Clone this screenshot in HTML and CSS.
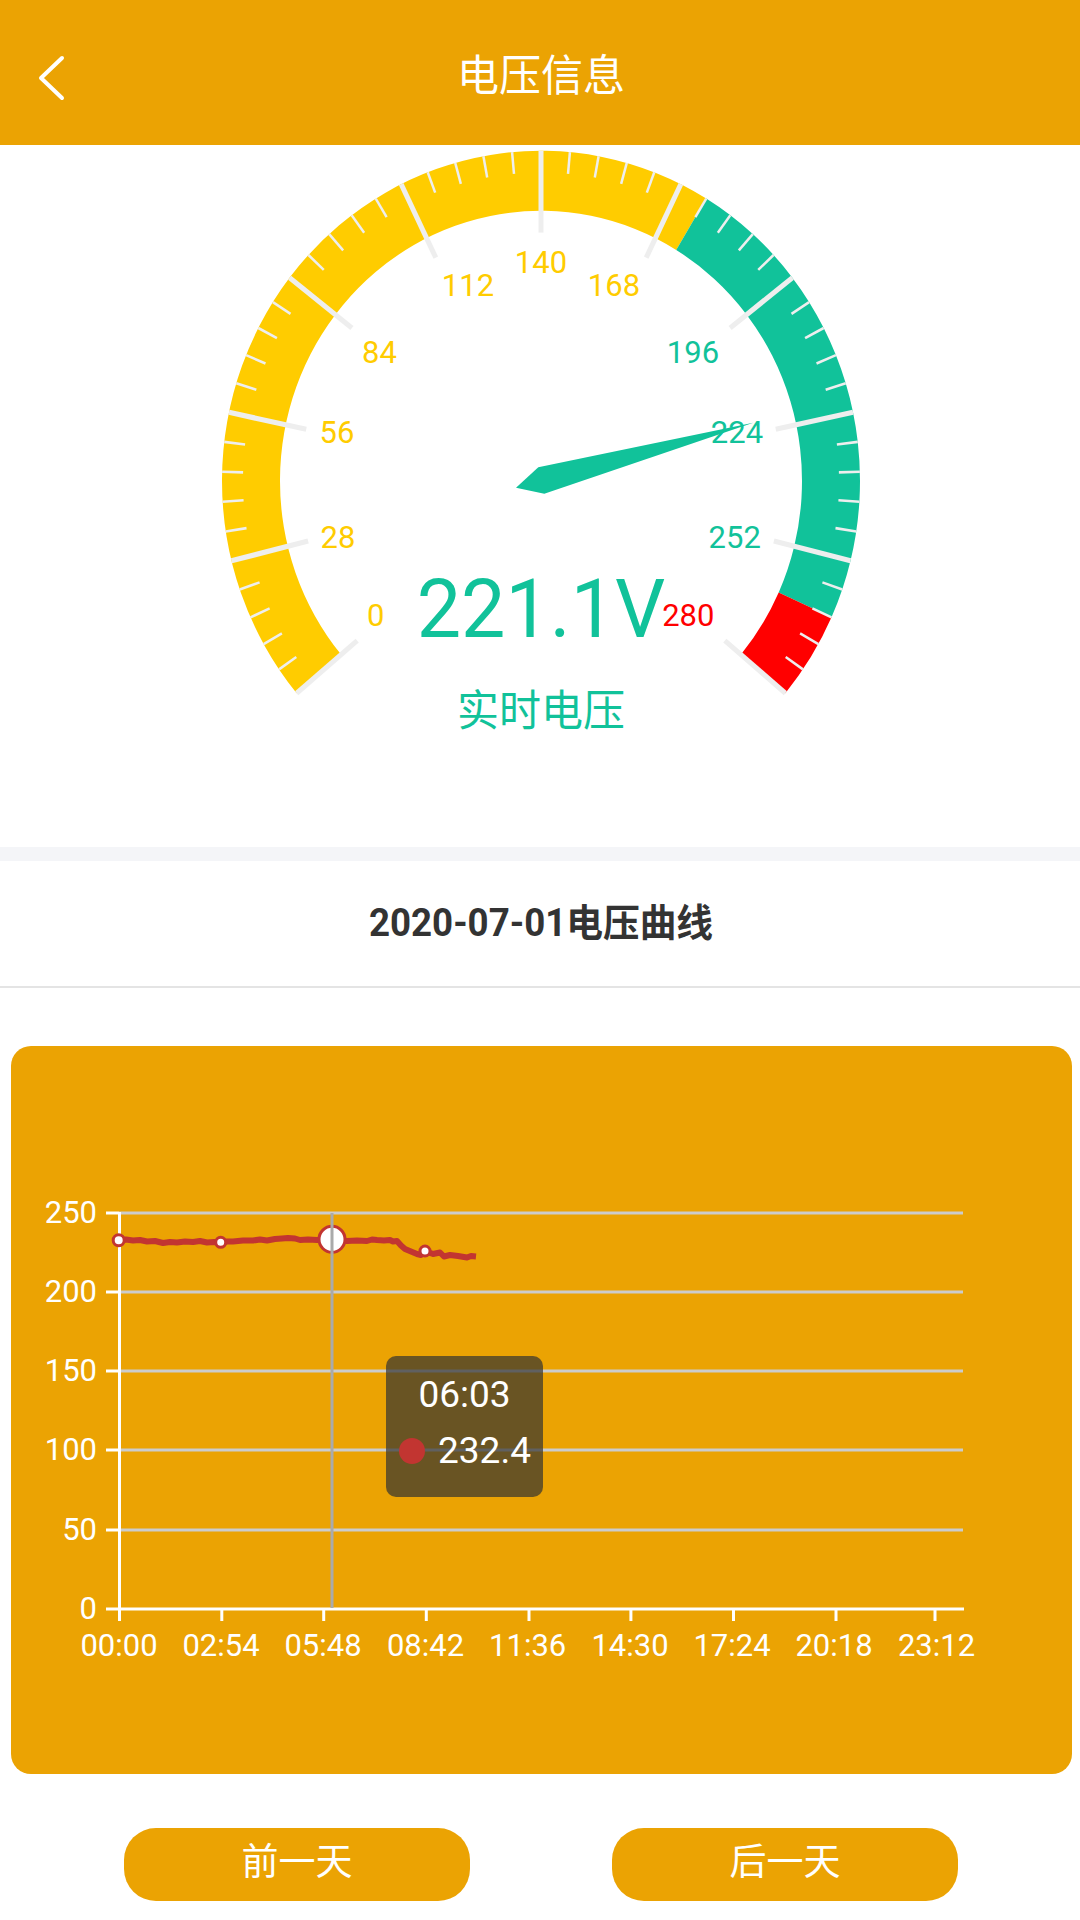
FILE: index.html
```html
<!DOCTYPE html>
<html lang="zh-CN">
<head>
    <meta charset="UTF-8">
    <meta name="viewport" content="width=device-width, initial-scale=1.0">
    <title>电压信息</title>
    <link rel="stylesheet" href="styles.css">
</head>
<body>
    <div class="nav-bar">
        <svg class="nav-back" width="30" height="48" viewBox="0 0 30 48">
            <path d="M25 4 L4 24 L25 44"></path>
        </svg>
        <span class="nav-title">电压信息</span>
    </div>

    <!-- coordinates are page coordinates, the screenshot is about 3.5% taller than wide -->
    <svg class="gauge" viewBox="0 145 1080 702">
        <g transform="scale(1 1.035)">
            <g id="gaugeBand"></g>
            <g id="gaugeTicks"></g>
        </g>
        <polygon class="gauge-needle" points="516,487.7 538.3,467.3 753.3,422.7 544.3,493.7"></polygon>
        <g transform="scale(1 1.035)">
            <text class="tick-label yellow" x="375.6" y="604.8">0</text>
            <text class="tick-label yellow" x="338" y="529">28</text>
            <text class="tick-label yellow" x="337" y="427.6">56</text>
            <text class="tick-label yellow" x="379.5" y="350.7">84</text>
            <text class="tick-label yellow" x="468" y="286">112</text>
            <text class="tick-label yellow" x="541" y="263.8">140</text>
            <text class="tick-label yellow" x="614" y="286">168</text>
            <text class="tick-label green" x="693" y="350.7">196</text>
            <text class="tick-label green" x="737" y="427.6">224</text>
            <text class="tick-label green" x="734.7" y="529">252</text>
            <text class="tick-label red" x="688.3" y="604.8">280</text>
            <text class="gauge-value" x="541" y="615.5">221.1V</text>
            <text class="gauge-name" x="541" y="701.5">实时电压</text>
        </g>
    </svg>

    <div class="section-gap"></div>
    <div class="section-title"><span>2020-07-01电压曲线</span></div>

    <div class="chart-card">
        <svg class="chart" viewBox="11 1046 1061 728">
            <g class="grid-lines">
                <line x1="119" y1="1213" x2="963" y2="1213"></line>
                <line x1="119" y1="1292" x2="963" y2="1292"></line>
                <line x1="119" y1="1371" x2="963" y2="1371"></line>
                <line x1="119" y1="1450" x2="963" y2="1450"></line>
                <line x1="119" y1="1530" x2="963" y2="1530"></line>
            </g>
            <g class="axis-lines">
                <line x1="119.5" y1="1212" x2="119.5" y2="1621"></line>
                <line x1="106" y1="1609" x2="964" y2="1609"></line>
                <line x1="106" y1="1213" x2="119" y2="1213"></line>
                <line x1="106" y1="1292" x2="119" y2="1292"></line>
                <line x1="106" y1="1371" x2="119" y2="1371"></line>
                <line x1="106" y1="1450" x2="119" y2="1450"></line>
                <line x1="106" y1="1530" x2="119" y2="1530"></line>
                <line x1="221.8" y1="1609" x2="221.8" y2="1621"></line>
                <line x1="323.7" y1="1609" x2="323.7" y2="1621"></line>
                <line x1="426.3" y1="1609" x2="426.3" y2="1621"></line>
                <line x1="529" y1="1609" x2="529" y2="1621"></line>
                <line x1="630.9" y1="1609" x2="630.9" y2="1621"></line>
                <line x1="733.5" y1="1609" x2="733.5" y2="1621"></line>
                <line x1="836" y1="1609" x2="836" y2="1621"></line>
                <line x1="935" y1="1609" x2="935" y2="1621"></line>
            </g>
            <polyline class="volt-line" points="119,1240 126,1239.5 133,1240.5 140,1240 147,1241.5 155,1241 163,1243 170,1242 177,1242.5 185,1241.5 193,1242 200,1241 207,1242.5 214,1242 221,1243 227,1241.5 233,1241.5 243,1240.5 253,1240.5 260,1239.5 267,1240.5 275,1239 282,1238.5 288,1238 295,1238.5 300,1240 308,1239.5 317,1240 324,1239.5 332,1239.5 340,1240 347,1241 357,1240.5 367,1241 372,1239.5 377,1240 384,1240.5 390,1240 393,1241.5 397,1241 401,1245.5 405,1249 411,1251.5 417,1254 421,1255 425,1251 433,1254 440,1252.5 444,1256.5 450,1255 458,1256 467,1257.5 471,1256 476,1256.5"></polyline>
            <circle class="volt-dot" cx="118.7" cy="1240.3" r="5.5"></circle>
            <circle class="volt-dot" cx="220.7" cy="1242.3" r="5"></circle>
            <circle class="volt-dot" cx="425" cy="1251" r="5"></circle>
            <circle class="volt-dot" cx="332" cy="1239.3" r="13"></circle>
            <line class="pointer-line" x1="332" y1="1213" x2="332" y2="1608"></line>
            <g transform="scale(1 1.035)">
                <text class="y-label" x="97" y="1181.6">250</text>
                <text class="y-label" x="97" y="1257.9">200</text>
                <text class="y-label" x="97" y="1334.2">150</text>
                <text class="y-label" x="97" y="1410.6">100</text>
                <text class="y-label" x="97" y="1487.9">50</text>
                <text class="y-label" x="97" y="1564.2">0</text>
                <text class="x-label" x="119" y="1599.7">00:00</text>
                <text class="x-label" x="221" y="1599.7">02:54</text>
                <text class="x-label" x="323" y="1599.7">05:48</text>
                <text class="x-label" x="425.5" y="1599.7">08:42</text>
                <text class="x-label" x="527.7" y="1599.7">11:36</text>
                <text class="x-label" x="630" y="1599.7">14:30</text>
                <text class="x-label" x="732" y="1599.7">17:24</text>
                <text class="x-label" x="834" y="1599.7">20:18</text>
                <text class="x-label" x="936.5" y="1599.7">23:12</text>
            </g>
        </svg>
        <div class="chart-tip">
            <div class="tip-time">06:03</div>
            <div class="tip-row"><i class="tip-dot"></i><span>232.4</span></div>
        </div>
    </div>

    <div class="day-buttons">
        <button class="day-btn"><span>前一天</span></button>
        <button class="day-btn"><span>后一天</span></button>
    </div>

    <script src="gauge.js"></script>
</body>
</html>
```

FILE: styles.css
```css
body {
    margin: 0;
    width: 1080px;
    height: 1920px;
    overflow: hidden;
    background: #fff;
    font-family: Roboto, "Noto Sans CJK SC", sans-serif;
}
.nav-bar {
    height: 145px;
    background: #eba303;
    display: flex;
    align-items: center;
    justify-content: center;
    position: relative;
}
.nav-back {
    position: absolute;
    left: 37px;
    top: 54px;
}
.nav-back path {
    fill: none;
    stroke: #fff;
    stroke-width: 4;
    stroke-linecap: round;
    stroke-linejoin: round;
}
.nav-title {
    color: #fff;
    font-size: 42px;
    transform: scaleY(1.035);
    margin-bottom: 2px;
    margin-left: 2px;
}
.gauge {
    display: block;
    width: 1080px;
    height: 702px;
}
.band-yellow { fill: #ffcc00; }
.band-green { fill: #11c29a; }
.band-red { fill: #ff0000; }
.tick-minor {
    stroke: #eeeeee;
    stroke-width: 2.5;
}
.tick-major {
    stroke: #eeeeee;
    stroke-width: 5;
}
.gauge-needle { fill: #11c29a; }
.tick-label {
    font-size: 31px;
    text-anchor: middle;
}
.yellow { fill: #ffcc00; }
.green { fill: #11c29a; }
.red { fill: #ff0000; }
.gauge-value {
    font-size: 79px;
    text-anchor: middle;
    fill: #11c29a;
}
.gauge-name {
    font-size: 42px;
    text-anchor: middle;
    fill: #11c29a;
}
.section-gap {
    height: 14px;
    background: #f4f5f8;
}
.section-title {
    height: 125px;
    border-bottom: 2px solid #e4e4e4;
    display: flex;
    align-items: center;
    justify-content: center;
}
.section-title span {
    font-size: 36.7px;
    font-weight: bold;
    color: #333;
    transform: scaleY(1.035);
    margin-left: 2px;
    margin-bottom: 10px;
}
.chart-card {
    position: relative;
    margin: 58px 8px 0 11px;
    height: 728px;
    border-radius: 20px;
    background: #eba303;
}
.chart {
    display: block;
    width: 1061px;
    height: 728px;
}
.grid-lines line {
    stroke: #cccccc;
    stroke-width: 3;
}
.axis-lines line {
    stroke: #fff;
    stroke-width: 3;
}
.volt-line {
    fill: none;
    stroke: #c23531;
    stroke-width: 6;
    stroke-linejoin: round;
}
.volt-dot {
    fill: #fff;
    stroke: #c23531;
    stroke-width: 3;
}
.pointer-line {
    stroke: #aaaaaa;
    stroke-width: 3;
}
.y-label {
    font-size: 31px;
    fill: #fff;
    text-anchor: end;
}
.x-label {
    font-size: 31px;
    fill: #fff;
    text-anchor: middle;
}
.chart-tip {
    position: absolute;
    left: 375px;
    top: 310px;
    width: 157px;
    height: 141px;
    box-sizing: border-box;
    padding: 18px 0 0 13px;
    border-radius: 10px;
    background: rgba(50, 50, 50, 0.7);
    color: #fff;
    font-size: 37px;
    line-height: 42px;
}
.tip-time {
    text-align: center;
    padding-right: 13px;
    margin-bottom: 14px;
}
.tip-row {
    display: flex;
    align-items: center;
    gap: 13px;
}
.tip-dot {
    width: 26px;
    height: 26px;
    border-radius: 50%;
    background: #c23531;
}
.day-buttons {
    display: flex;
    justify-content: space-between;
    margin: 54px 122px 0 124px;
}
.day-btn {
    width: 346px;
    height: 73px;
    padding: 0 0 11px;
    border: none;
    border-radius: 32px;
    background: #eba303;
    color: #fff;
    font-family: Roboto, "Noto Sans CJK SC", sans-serif;
    font-size: 37px;
}
```

FILE: gauge.js
```js
// gauge centre and radii, y is inside the scale(1 1.035) group
const CX = 541;
const CY = 464.7;
const OUTER = 319;
const INNER = 261;
const NS = 'http://www.w3.org/2000/svg';

// angle from straight up, value goes from -130 to 130 degrees
function point(frac, r) {
    const a = (-130 + 260 * frac) * Math.PI / 180;
    return [CX + r * Math.sin(a), CY - r * Math.cos(a)];
}

function addBand(from, to, cls) {
    const [x1, y1] = point(from, OUTER);
    const [x2, y2] = point(to, OUTER);
    const [x3, y3] = point(to, INNER);
    const [x4, y4] = point(from, INNER);
    const large = (to - from) * 260 > 180 ? 1 : 0;
    const path = document.createElementNS(NS, 'path');
    path.setAttribute('d', `M${x1} ${y1} A${OUTER} ${OUTER} 0 ${large} 1 ${x2} ${y2} L${x3} ${y3} A${INNER} ${INNER} 0 ${large} 0 ${x4} ${y4} Z`);
    path.setAttribute('class', cls);
    document.getElementById('gaugeBand').appendChild(path);
}

addBand(0, 0.62, 'band-yellow');
addBand(0.62, 0.94, 'band-green');
addBand(0.94, 1, 'band-red');

// 10 splits with 5 small steps each
for (let i = 0; i <= 50; i++) {
    const major = i % 5 === 0;
    const [x1, y1] = point(i / 50, OUTER);
    const [x2, y2] = point(i / 50, OUTER - (major ? 79 : 21));
    const line = document.createElementNS(NS, 'line');
    line.setAttribute('x1', x1);
    line.setAttribute('y1', y1);
    line.setAttribute('x2', x2);
    line.setAttribute('y2', y2);
    line.setAttribute('class', major ? 'tick-major' : 'tick-minor');
    document.getElementById('gaugeTicks').appendChild(line);
}
```
